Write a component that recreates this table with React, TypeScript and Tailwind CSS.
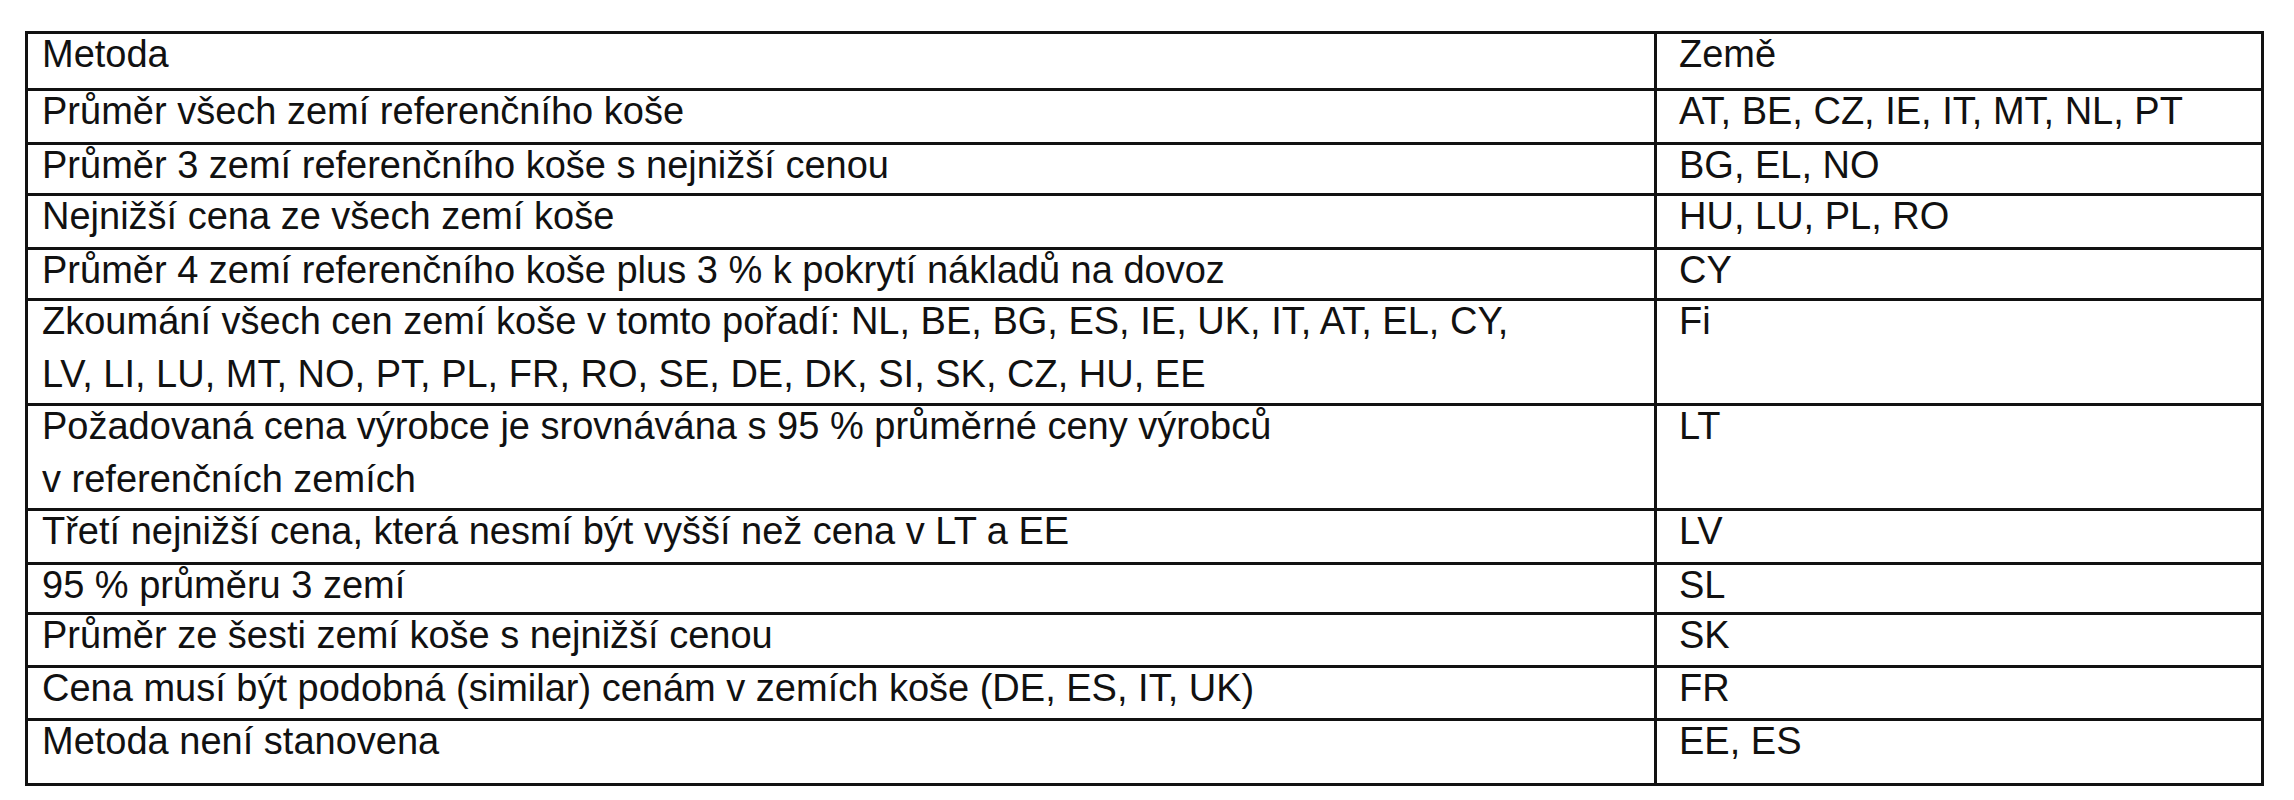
import React from "react"

type Row = {
  method: string[]
  countries: string
  h: string
}

const rows: Row[] = [
  { method: ["Průměr všech zemí referenčního koše"], countries: "AT, BE, CZ, IE, IT, MT, NL, PT", h: "h-[54px]" },
  { method: ["Průměr 3 zemí referenčního koše s nejnižší cenou"], countries: "BG, EL, NO", h: "h-[51px]" },
  { method: ["Nejnižší cena ze všech zemí koše"], countries: "HU, LU, PL, RO", h: "h-[54px]" },
  { method: ["Průměr 4 zemí referenčního koše plus 3 % k pokrytí nákladů na dovoz"], countries: "CY", h: "h-[51px]" },
  {
    method: [
      "Zkoumání všech cen zemí koše v tomto pořadí: NL, BE, BG, ES, IE, UK, IT, AT, EL, CY,",
      "LV, LI, LU, MT, NO, PT, PL, FR, RO, SE, DE, DK, SI, SK, CZ, HU, EE",
    ],
    countries: "Fi",
    h: "h-[105px]",
  },
  {
    method: ["Požadovaná cena výrobce je srovnávána s 95 % průměrné ceny výrobců", "v referenčních zemích"],
    countries: "LT",
    h: "h-[105px]",
  },
  { method: ["Třetí nejnižší cena, která nesmí být vyšší než cena v LT a EE"], countries: "LV", h: "h-[54px]" },
  { method: ["95 % průměru 3 zemí"], countries: "SL", h: "h-[50px]" },
  { method: ["Průměr ze šesti zemí koše s nejnižší cenou"], countries: "SK", h: "h-[53px]" },
  { method: ["Cena musí být podobná (similar) cenám v zemích koše (DE, ES, IT, UK)"], countries: "FR", h: "h-[53px]" },
  { method: ["Metoda není stanovena"], countries: "EE, ES", h: "h-[65px]" },
]

const Cell: React.FC<{ lines: string[]; className?: string }> = ({ lines, className = "" }) => (
  <div className={`overflow-hidden ${className}`}>
    <div className="-mt-[6px]">
      {lines.map((l, i) => (
        <div key={i} className="whitespace-nowrap leading-[53px]">
          {l}
        </div>
      ))}
    </div>
  </div>
)

export default function App() {
  return (
    <div
      className="w-[2294px] h-[800px] bg-white pt-[31px] pl-[25px] text-[38px] text-[#111]"
      style={{ fontFamily: '"Liberation Sans", Arial, sans-serif' }}
    >
      <div className="w-[2239px] border-[3px] border-[#111]">
        <div className="grid grid-cols-[1629px_1fr] h-[54px]">
          <Cell lines={["Metoda"]} className="pl-[14px] border-r-[3px] border-[#111]" />
          <Cell lines={["Země"]} className="pl-[22px]" />
        </div>
        {rows.map((r, i) => (
          <div key={i} className={`grid grid-cols-[1629px_1fr] border-t-[3px] border-[#111] ${r.h}`}>
            <Cell lines={r.method} className="pl-[14px] border-r-[3px] border-[#111]" />
            <Cell lines={[r.countries]} className="pl-[22px]" />
          </div>
        ))}
      </div>
    </div>
  )
}
